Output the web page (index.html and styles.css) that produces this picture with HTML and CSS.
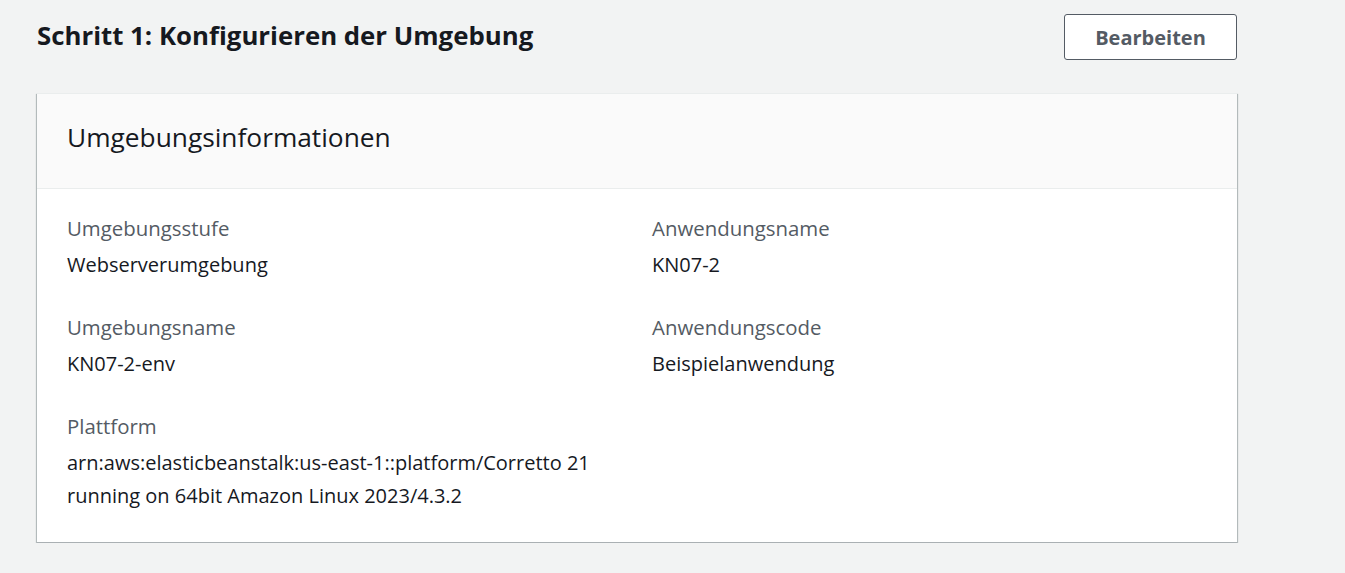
FILE: index.html
```html
<!DOCTYPE html>
<html lang="de">
<head>
<meta charset="utf-8">
<title>Schritt 1</title>
<link rel="stylesheet" href="styles.css">
</head>
<body>
<main class="page">
  <div class="step-header">
    <h1 class="step-title">Schritt 1: Konfigurieren der Umgebung</h1>
    <button class="btn">Bearbeiten</button>
  </div>
  <section class="card">
    <div class="card-header">
      <h2 class="card-title">Umgebungsinformationen</h2>
    </div>
    <div class="card-body">
      <div class="field">
        <div class="label">Umgebungsstufe</div>
        <div class="value">Webserverumgebung</div>
      </div>
      <div class="field">
        <div class="label">Anwendungsname</div>
        <div class="value">KN07-2</div>
      </div>
      <div class="field">
        <div class="label">Umgebungsname</div>
        <div class="value">KN07-2-env</div>
      </div>
      <div class="field">
        <div class="label">Anwendungscode</div>
        <div class="value">Beispielanwendung</div>
      </div>
      <div class="field">
        <div class="label">Plattform</div>
        <div class="value">arn:aws:elasticbeanstalk:us-east-1::platform/Corretto 21 running on 64bit Amazon Linux 2023/4.3.2</div>
      </div>
    </div>
  </section>
</main>
</body>
</html>
```

FILE: styles.css
```css
html, body {
  margin: 0;
  padding: 0;
  background: #f2f3f3;
  font-family: "Open Sans", "Noto Sans", sans-serif;
  color: #16191f;
}

.page {
  width: 1200px;
  margin-left: 37px;
  padding-top: 14px;
}

.step-header {
  display: flex;
  align-items: center;
  justify-content: space-between;
  height: 46px;
}

.step-title {
  margin: 0 0 4px;
  font-size: 25.8px;
  font-weight: 700;
  line-height: 32px;
  color: #16191f;
}

.btn {
  box-sizing: border-box;
  width: 173px;
  height: 46px;
  background: #ffffff;
  border: 1px solid #545b64;
  border-radius: 3px;
  font-family: inherit;
  font-size: 20px;
  font-weight: 700;
  color: #545b64;
  padding: 0;
}

.card {
  margin-top: 33px;
  background: #ffffff;
  border-top: 1px solid #eaeded;
  border-bottom: 1px solid #aab0b3;
  box-shadow: 0 1px 1px 0 rgba(0, 28, 36, 0.3), 1px 1px 1px 0 rgba(0, 28, 36, 0.22), -1px 1px 1px 0 rgba(0, 28, 36, 0.22);
}

.card-header {
  background: #fafafa;
  border-bottom: 1px solid #eaeded;
  height: 94px;
  display: flex;
  align-items: center;
  padding: 0 30px;
}

.card-title {
  margin: 0 0 8px;
  font-size: 26.3px;
  font-weight: 400;
  line-height: 32px;
  color: #16191f;
}

.card-body {
  display: grid;
  grid-template-columns: 1fr 1fr;
  column-gap: 30px;
  row-gap: 30px;
  padding: 23px 30px 30px;
}

.label {
  font-size: 20.4px;
  line-height: 33px;
  color: #545b64;
}

.value {
  margin-top: 3px;
  font-size: 20px;
  line-height: 33px;
  color: #16191f;
}
```
